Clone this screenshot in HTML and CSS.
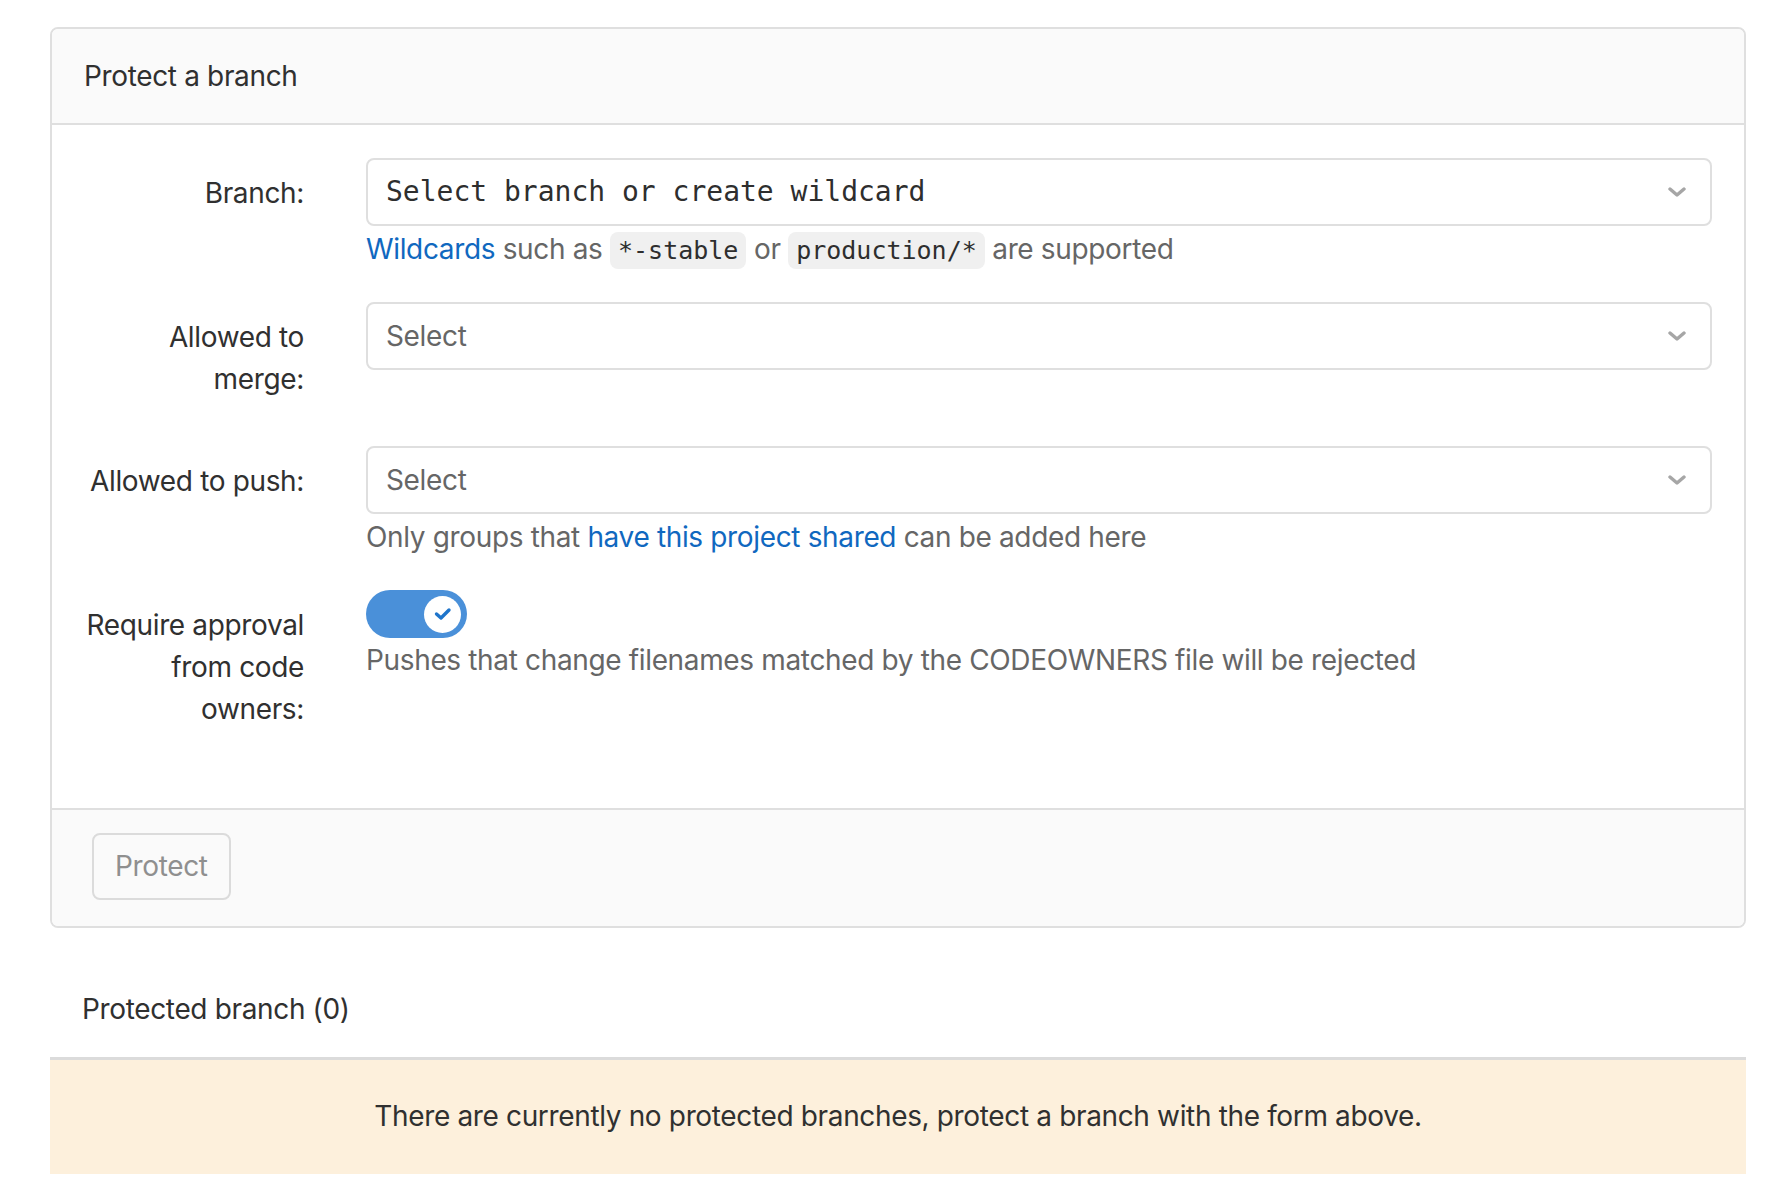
FILE: index.html
```html
<!DOCTYPE html>
<html lang="en">
<head>
<meta charset="utf-8">
<title>Protected branches</title>
<link rel="stylesheet" href="styles.css">
</head>
<body>
<div class="page">
  <form class="card">
    <div class="card-header">Protect a branch</div>
    <div class="card-body">
      <div class="form-group form-group-first">
        <label class="form-label">Branch:</label>
        <div class="field">
          <div class="select select-mono">
            <span class="select-text">Select branch or create wildcard</span>
            <svg class="chevron" width="18" height="10" viewBox="0 0 18 10"><polyline points="2,2 9,8 16,2" fill="none" stroke="#a6a6a6" stroke-width="3.4" stroke-linecap="round" stroke-linejoin="round"/></svg>
          </div>
          <p class="help"><a class="link" href="#">Wildcards</a> such as <code>*-stable</code> or <code>production/*</code> are supported</p>
        </div>
      </div>
      <div class="form-group">
        <label class="form-label">Allowed to merge:</label>
        <div class="field">
          <div class="select">
            <span class="select-text placeholder">Select</span>
            <svg class="chevron" width="18" height="10" viewBox="0 0 18 10"><polyline points="2,2 9,8 16,2" fill="none" stroke="#a6a6a6" stroke-width="3.4" stroke-linecap="round" stroke-linejoin="round"/></svg>
          </div>
        </div>
      </div>
      <div class="form-group">
        <label class="form-label">Allowed to push:</label>
        <div class="field">
          <div class="select">
            <span class="select-text placeholder">Select</span>
            <svg class="chevron" width="18" height="10" viewBox="0 0 18 10"><polyline points="2,2 9,8 16,2" fill="none" stroke="#a6a6a6" stroke-width="3.4" stroke-linecap="round" stroke-linejoin="round"/></svg>
          </div>
          <p class="help">Only groups that <a class="link" href="#">have this project shared</a> can be added here</p>
        </div>
      </div>
      <div class="form-group">
        <label class="form-label">Require approval from code owners:</label>
        <div class="field">
          <div class="toggle">
            <span class="knob">
              <svg width="18" height="14" viewBox="0 0 18 14"><polyline points="2.5,7 7,11 15,3" fill="none" stroke="#1f75cb" stroke-width="3.4" stroke-linecap="round" stroke-linejoin="round"/></svg>
            </span>
          </div>
          <p class="help help-tight">Pushes that change filenames matched by the CODEOWNERS file will be rejected</p>
        </div>
      </div>
    </div>
    <div class="card-footer">
      <button class="btn" type="button" disabled>Protect</button>
    </div>
  </form>

  <h5 class="list-title">Protected branch (0)</h5>
  <div class="empty-note">There are currently no protected branches, protect a branch with the form above.</div>
</div>
</body>
</html>
```

FILE: styles.css
```css
* { box-sizing: border-box; }

body {
  margin: 0;
  background: #fff;
  font-family: "Inter", "Liberation Sans", sans-serif;
  font-size: 28px;
  line-height: 42px;
  letter-spacing: -0.35px;
  color: #303030;
}

.page {
  padding: 27px 44px 0 50px;
}

.card {
  display: block;
  border: 2px solid #dfdfdf;
  border-radius: 8px;
  overflow: hidden;
  margin: 0;
}

.card-header {
  background: #fafafa;
  padding: 26px 32px;
  border-bottom: 2px solid #dfdfdf;
}

.card-body {
  padding: 33px 32px 32px 28px;
}

.form-group {
  display: grid;
  grid-template-columns: 224px 1fr;
  column-gap: 62px;
  margin-bottom: 32px;
}

.form-group-first {
  margin-bottom: 30px;
}

.form-label {
  text-align: right;
  padding: 14px 0;
}

.field {
  min-width: 0;
}

.select {
  display: flex;
  align-items: center;
  justify-content: space-between;
  height: 68px;
  border: 2px solid #dfdfdf;
  border-radius: 8px;
  background: #fff;
  padding: 0 24px 0 18px;
}

.select-mono .select-text {
  font-family: "DejaVu Sans Mono", "Liberation Mono", monospace;
  font-size: 28px;
  letter-spacing: 0;
  color: #2e2e2e;
}

.placeholder {
  color: #666;
}

.chevron {
  flex: none;
}

.help {
  margin: 2px 0 0;
  color: #666;
}

.help-tight {
  margin-top: 1px;
}

.link {
  color: #1068bf;
  text-decoration: none;
}

code {
  font-family: "DejaVu Sans Mono", "Liberation Mono", monospace;
  font-size: 25px;
  letter-spacing: 0;
  color: #2e2e2e;
  background: #f0f0f0;
  border-radius: 8px;
  padding: 4px 8px;
}

.toggle {
  width: 101px;
  height: 48px;
  border-radius: 24px;
  background: #4a90d9;
  display: flex;
  align-items: center;
  justify-content: flex-end;
  padding-right: 6px;
}

.knob {
  width: 37px;
  height: 37px;
  border-radius: 50%;
  background: #fff;
  display: flex;
  align-items: center;
  justify-content: center;
}

.card-footer {
  background: #fafafa;
  border-top: 2px solid #dfdfdf;
  padding: 23px 40px 26px;
}

.btn {
  font-family: inherit;
  font-size: 28px;
  line-height: 43px;
  letter-spacing: -0.35px;
  color: #8f8f8f;
  background: #fafafa;
  border: 2px solid #dbdbdb;
  border-radius: 8px;
  padding: 10px 21px;
  cursor: default;
}

.list-title {
  margin: 60px 0 0;
  padding: 0 32px 27px;
  font-size: 28px;
  font-weight: 400;
  line-height: 42px;
}

.empty-note {
  border-top: 3px solid #dbdbdb;
  background: #fdf0dc;
  text-align: center;
  padding: 35px 32px 37px;
}
```
